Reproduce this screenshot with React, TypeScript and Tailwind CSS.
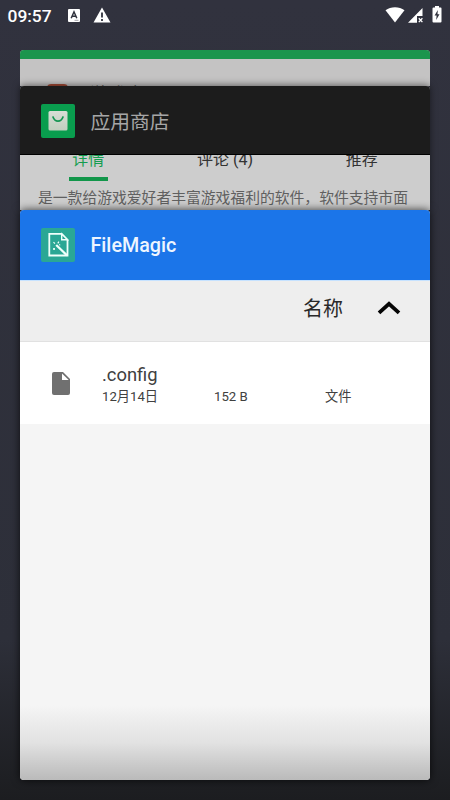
import type { ReactNode } from "react";

const FILES = [{ name: ".config", date: "12月14日", size: "152 B", type: "文件" }];

function StatusBar() {
  return (
    <header className="flex h-[50px] shrink-0 items-start justify-between pt-[6px] pr-2 pl-[7.5px] text-white">
      <div className="flex items-center">
        <span className="w-[60.5px] text-[17.4px] leading-5 font-medium">09:57</span>
        <svg width="12" height="13" viewBox="0 0 12 13" className="-mt-0.5 block">
          <rect width="12" height="13" rx="1" fill="#fff" />
          <path d="M3.2 9.2 6 2.8l2.8 6.4M4.3 7.2h3.4" fill="none" stroke="#30323d" strokeWidth="1.5" />
          <path d="M6.5 11.3h4" stroke="#8b8c93" strokeWidth="0.8" />
        </svg>
        <svg width="18" height="16" viewBox="0 0 18 16" className="-mt-0.5 ml-[13px] block">
          <path d="M9 .5 17.5 15.5H.5Z" fill="#fff" />
          <path d="M9 5.5v5M9 12v2" stroke="#30323d" strokeWidth="1.8" />
        </svg>
      </div>
      <div className="flex items-start">
        <svg width="20" height="17" viewBox="0 0 20 17" className="block">
          <path d="M.5 4.3C5.8.1 14.2.1 19.5 4.3L10 16.5Z" fill="#fff" />
        </svg>
        <svg width="16" height="17" viewBox="0 0 16 17" className="ml-[3px] block">
          <path d="M14.5 2v8H9v6.7H0Z" fill="#fff" />
          <path d="m10.8 12.3 3.6 3.8m0-3.8-3.6 3.8" stroke="#fff" strokeWidth="1.3" />
        </svg>
        <svg width="10" height="17" viewBox="0 0 10 17" className="ml-2 block">
          <path d="M3 0h4v1.6h1.7a1 1 0 0 1 .8 1v13a1 1 0 0 1-1 1h-7a1 1 0 0 1-1-1v-13a1 1 0 0 1 1-1H3Z" fill="#fff" />
          <path d="M5.8 4 2.6 9.6h2L4.2 14 7.5 8.2h-2Z" fill="#30323d" />
        </svg>
      </div>
    </header>
  );
}

function TaskHeader({ icon, title, className }: { icon: ReactNode; title: string; className: string }) {
  return (
    <div className={`relative z-10 flex shrink-0 items-center pl-[20.5px] ${className}`}>
      {icon}
      <h2 className="ml-4">{title}</h2>
    </div>
  );
}

function StoreIcon() {
  return (
    <svg width="34" height="34" viewBox="0 0 34 34" className="block">
      <defs>
        <linearGradient id="bag" x2="0" y2="1">
          <stop stopColor="#d7ddd5" />
          <stop offset="1" stopColor="#c0cebf" />
        </linearGradient>
      </defs>
      <rect width="34" height="34" rx="2" fill="#099d4e" />
      <rect x="7.5" y="7" width="19" height="19.5" rx="1.5" fill="url(#bag)" />
      <path d="M12 13c2 5.5 8 5.5 10 0" fill="none" stroke="#159653" strokeWidth="1.7" strokeLinecap="round" />
    </svg>
  );
}

function FileMagicIcon() {
  return (
    <svg width="34" height="34" viewBox="0 0 34 34" className="block">
      <rect width="34" height="34" rx="2" fill="#2aa795" />
      <path d="M8.3 5.8h12.4l5.8 6v15.7H8.3Z" fill="none" stroke="#effffb" strokeWidth="1.8" />
      <path d="M20.7 6v5.8h5.8Z" fill="#2aa795" stroke="#effffb" strokeWidth="1.4" />
      <path d="m15.2 17 11 10.5" stroke="#effffb" strokeWidth="2.3" />
      <path d="m12.5 14.2 1.4 1.4m4-1.9-1.1 1.7m-3.4 5-.2.8m5-4.2 1-.4" stroke="#effffb" strokeWidth="1.2" />
      <circle cx="13" cy="21" r="1.1" fill="#effffb" />
    </svg>
  );
}

/* Only the top of this card peeks out above the store card */
function BackgroundCard() {
  return (
    <section className="flex h-9 shrink-0 flex-col overflow-hidden rounded-t-sm bg-[#c4c3c3]">
      <div className="h-[9px] shrink-0 bg-[#1b954d]" />
      <div className="flex items-start pt-[25px] pl-[27px]">
        <div className="h-8 w-[21px] rounded-t bg-[#a54b36]" />
        <span className="ml-[22px] text-[18px] leading-[21px] text-[#333]">游戏盒</span>
      </div>
    </section>
  );
}

function StoreCard() {
  return (
    <section className="relative z-10 flex h-[124px] shrink-0 flex-col overflow-hidden rounded-t-sm bg-[#cdcdcd] shadow-[0_-1px_7px_rgba(0,0,0,0.5)]">
      <TaskHeader
        icon={<StoreIcon />}
        title="应用商店"
        className="h-[69px] border-b border-black bg-[#1c1c1c] pt-px text-[19.8px] text-[#a6a6a6] [&>h2]:pt-1"
      />
      <div className="-mt-[6px] grid h-8 shrink-0 grid-cols-3 text-center text-[16px] leading-[22px] text-[#333]">
        <div className="flex flex-col items-center text-[#159d50]">
          <span>详情</span>
          <span className="mt-[6px] h-[3.5px] w-[39px] shrink-0 bg-[#12964a]" />
        </div>
        <span>评论 (4)</span>
        <span>推荐</span>
      </div>
      <p className="mt-[6px] pl-[18px] text-[14.8px] leading-[23px] whitespace-nowrap text-[#606060]">
        是一款给游戏爱好者丰富游戏福利的软件，软件支持市面
      </p>
    </section>
  );
}

function FileCard() {
  return (
    <section className="relative z-20 flex h-[570px] shrink-0 flex-col overflow-hidden rounded-sm bg-[#f5f5f5] shadow-[0_0_8px_rgba(0,0,0,0.75)]">
      <TaskHeader
        icon={<FileMagicIcon />}
        title="FileMagic"
        className="h-[70px] bg-[#1b75e9] text-[19.7px] font-medium text-[#eef5ff] [&>h2]:pt-0.5"
      />
      <div className="flex h-[62px] shrink-0 items-center justify-end border-t border-b border-t-[#c6e2ff] border-b-[#e1e1e1] bg-[#eee] pr-[29px] pb-1 text-[20px] text-[#292929]">
        <span>名称</span>
        <svg width="24" height="16" viewBox="0 0 24 16" className="ml-[34px] block">
          <path d="m2 11.8 10-9 10 9" fill="none" stroke="#050505" strokeWidth="3.8" />
        </svg>
      </div>
      {FILES.map((file) => (
        <div key={file.name} className="flex h-[82px] shrink-0 bg-white pl-8">
          <svg width="18" height="23" viewBox="0 0 18 23" className="mt-[30px] block">
            <path d="M2 0h9l7 7v14a2 2 0 0 1-2 2H2a2 2 0 0 1-2-2V2a2 2 0 0 1 2-2Z" fill="#707070" />
            <path d="M10 1.5V8h6.7Z" fill="#fff" />
          </svg>
          <div className="ml-8 pt-[21px] text-[#404040]">
            <p className="text-[18.4px] leading-6">{file.name}</p>
            <div className="grid grid-cols-[112px_111px_60px] pt-px text-[13.2px] leading-[18px]">
              <span>{file.date}</span>
              <span>{file.size}</span>
              <span>{file.type}</span>
            </div>
          </div>
        </div>
      ))}
      <div className="mt-auto h-[75px] bg-linear-to-b from-[#f5f5f5] via-[#e2e2e2] to-[#bababa]" />
    </section>
  );
}

export default function App() {
  return (
    <main className="flex h-[800px] w-[450px] flex-col overflow-hidden bg-linear-to-b from-[#31323e] from-0% via-[#2d2f39] via-80% to-[#1c1d20] font-['Roboto','Noto_Sans_CJK_SC',sans-serif]">
      <StatusBar />
      <div className="flex flex-col px-5">
        <BackgroundCard />
        <StoreCard />
        <FileCard />
      </div>
    </main>
  );
}
